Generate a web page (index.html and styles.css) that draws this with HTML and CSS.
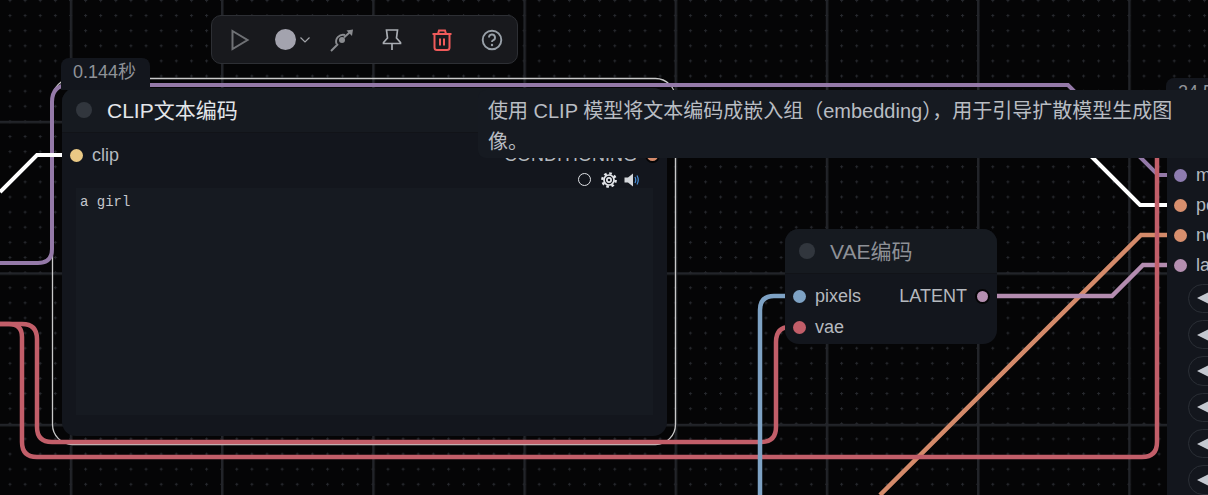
FILE: index.html
```html
<!DOCTYPE html>
<html lang="zh-CN">
<head>
  <meta charset="UTF-8" />
  <title>ComfyUI</title>
  <link rel="stylesheet" href="styles.css">
</head>
<body>

<main class="canvas">

  <!-- grid + links -->
  <svg class="wires" width="1208" height="495" viewBox="0 0 1208 495" fill="none">
    <defs>
      <pattern id="dots" width="15.12" height="15.12" patternUnits="userSpaceOnUse" patternTransform="translate(8.5 -1)">
        <path d="M0 1.5h3M1.5 0v3" stroke="#27292e" stroke-width="1"/>
      </pattern>
      <pattern id="major" width="151.2" height="151.5" patternUnits="userSpaceOnUse" patternTransform="translate(69.8 120.8)">
        <rect width="2.5" height="151.5" fill="#222429"/>
        <rect width="151.2" height="2.5" fill="#222429"/>
      </pattern>
    </defs>
    <rect width="1208" height="495" fill="url(#dots)"/>
    <rect width="1208" height="495" fill="url(#major)"/>

    <rect x="52.5" y="78.5" width="623" height="366" rx="20" stroke="#c9c9c9" stroke-width="1.3"/>

    <path d="M0 263H38Q52 263 52 249V102Q52 85 69 85H1068L1158 175H1170" stroke="#9479a8" stroke-width="4"/>
    <path d="M0 192L37 155H64" stroke="#fff" stroke-width="4"/>
    <path d="M1090 155L1140 205H1170" stroke="#fff" stroke-width="4"/>
    <path d="M880 495L1141 235H1170" stroke="#d48a6a" stroke-width="4.500"/>
    <path d="M990 296H1112L1143 265H1170" stroke="#b48cb0" stroke-width="4.500"/>
    <path d="M0 324H22Q37 324 37 339V427Q37 442 52 442H761Q776 442 776 427V342Q776 327 790 327" stroke="#c25e69" stroke-width="4.500"/>
    <path d="M0 324H9Q22 324 22 337V442Q22 457 37 457H1142Q1157 457 1157 442V150" stroke="#c25e69" stroke-width="4.500"/>
    <path d="M760 495V310Q760 296 774 296H790" stroke="#7ea2c4" stroke-width="4.500"/>
  </svg>

  <!-- toolbar -->
  <div class="toolbar">
    <button class="tool">
      <svg width="24" height="24" viewBox="0 0 24 24" fill="none" stroke="#6f7175" stroke-width="2"><path d="M5.500 3L20.500 12L5.500 21Z"/></svg>
    </button>
    <button class="tool tool-color">
      <span class="swatch"></span>
      <svg width="10" height="6" viewBox="0 0 10 6" fill="none" stroke="#a2a4a9" stroke-width="1.200"><path d="M0.500 0.500L5 5L9.500 0.500"/></svg>
    </button>
    <button class="tool">
      <svg width="26" height="26" viewBox="0 0 26 26" fill="none" stroke="#8a8c90" stroke-width="1.900"><path d="M2 24L9 17"/><path d="M7.500 17A7 7 0 0 1 16 8"/><path d="M15 10.500L21 5"/><circle cx="13" cy="13" r="3" fill="#8a8c90" stroke="none"/><path d="M17.500 3.500L24 2.500L23 9Z" fill="#8a8c90" stroke="none"/></svg>
    </button>
    <button class="tool">
      <svg width="22" height="24" viewBox="0 0 22 24" fill="none" stroke="#a9adb3" stroke-width="1.700"><path d="M5.500 2H16.500L15.500 10L19.500 14.500V15.500H2.500V14.500L6.500 10Z"/><path d="M11 15.500V22"/></svg>
    </button>
    <button class="tool">
      <svg width="22" height="24" viewBox="0 0 22 24" fill="none" stroke="#f05a5a" stroke-width="2"><path d="M1.500 6H20.500"/><path d="M7 6L8 2.500H14L15 6"/><path d="M3.500 6V19.500Q3.500 22 6 22H16Q18.500 22 18.500 19.500V6"/><path d="M9 10.500V17.500M13 10.500V17.500"/></svg>
    </button>
    <button class="tool">
      <svg width="22" height="22" viewBox="0 0 22 22" fill="none" stroke="#98a0a8" stroke-width="1.900"><circle cx="11" cy="11" r="9.300"/><path d="M8 8.500A3 3 0 1 1 12 11.300Q11 11.800 11 13"/><circle cx="11" cy="16" r="1.200" fill="#98a0a8" stroke="none"/></svg>
    </button>
  </div>

  <!-- CLIP node -->
  <section class="node node-clip">
    <div class="badge">0.144秒</div>
    <header class="node-head">
      <span class="state"></span>
      <h2 class="title">CLIP文本编码</h2>
    </header>
    <div class="node-body">
      <div class="slots">
        <div class="slot"><i class="pin pin-clip"></i>clip</div>
        <div class="slot slot-out">CONDITIONING<i class="pin pin-out pin-cond"></i></div>
      </div>
      <div class="prompt-tools">
        <span class="ring"></span>
        <svg width="16" height="16" viewBox="0 0 24 24" fill="none" stroke="#e4e6ea"><circle cx="12" cy="12" r="3.200" stroke-width="2.500"/><circle cx="12" cy="12" r="7.500" stroke-width="2.600"/><circle cx="12" cy="12" r="10" stroke-width="3.600" stroke-dasharray="3.930 3.930"/></svg>
        <svg width="16" height="14" viewBox="0 0 16 14" fill="none"><path d="M0.500 4.500H4L9 0.500V13.500L4 9.500H0.500Z" fill="#d5d8dc"/><path d="M11 4Q12.500 7 11 10M13 2.500Q15.500 7 13 11.500" stroke="#4a90d9" stroke-width="1.200"/></svg>
      </div>
      <div class="prompt">a girl</div>
    </div>
  </section>

  <!-- VAE node -->
  <section class="node node-vae">
    <header class="node-head">
      <span class="state"></span>
      <h2 class="title title-dim">VAE编码</h2>
    </header>
    <div class="node-body">
      <div class="slots">
        <div class="slot"><i class="pin pin-pixels"></i>pixels</div>
        <div class="slot slot-out">LATENT<i class="pin pin-out pin-latent"></i></div>
      </div>
      <div class="slots">
        <div class="slot"><i class="pin pin-vae"></i>vae</div>
      </div>
    </div>
  </section>

  <!-- KSampler, cut by the window edge -->
  <section class="node node-sampler">
    <div class="badge">24.5秒</div>
    <div class="sampler-inputs">
      <div class="slot"><i class="pin pin-model"></i>model</div>
      <div class="slot"><i class="pin pin-pos"></i>positive</div>
      <div class="slot"><i class="pin pin-pos"></i>negative</div>
      <div class="slot"><i class="pin pin-latent-in"></i>latent_image</div>
    </div>
    <div class="widgets">
      <div class="widget"><i class="arrow"></i></div>
      <div class="widget"><i class="arrow"></i></div>
      <div class="widget"><i class="arrow"></i></div>
      <div class="widget"><i class="arrow"></i></div>
      <div class="widget"><i class="arrow"></i></div>
      <div class="widget"><i class="arrow"></i></div>
    </div>
  </section>

  <!-- tooltip -->
  <div class="tooltip">使用 CLIP 模型将文本编码成嵌入组（embedding），用于引导扩散模型生成图像。</div>

</main>

</body>
</html>
```

FILE: styles.css
```css
* {
  box-sizing: border-box;
}

body {
  margin: 0;
  background: #050506;
  font-family: "Liberation Sans", "Noto Sans CJK SC", sans-serif;
  overflow: hidden;
}

.canvas {
  position: relative;
  width: 1208px;
  height: 495px;
  overflow: hidden;
}

.wires {
  position: absolute;
  left: 0;
  top: 0;
}

/* toolbar */
.toolbar {
  position: absolute;
  left: 211px;
  top: 15px;
  width: 307px;
  height: 49px;
  padding-left: 2px;
  display: flex;
  align-items: center;
  background: #18191d;
  border: 1px solid #2d2f34;
  border-radius: 10px;
}

.tool {
  flex: none;
  width: 50px;
  height: 100%;
  padding: 0;
  display: flex;
  align-items: center;
  justify-content: center;
  gap: 4px;
  background: none;
  border: none;
}

.tool-color {
  width: 53px;
  padding-left: 3px;
}

.swatch {
  width: 21px;
  height: 21px;
  border-radius: 50%;
  background: #a3a3ae;
}

/* nodes */
.node {
  position: absolute;
  background: #13161d;
  border-radius: 14px;
  color: #b5b9bf;
  font-size: 18px;
}

.node-clip {
  left: 62px;
  top: 88px;
  width: 605px;
  height: 348px;
  display: flex;
  flex-direction: column;
}

.node-vae {
  left: 785px;
  top: 229px;
  width: 212px;
  height: 115px;
}

.node-sampler {
  left: 1167px;
  top: 108px;
  width: 300px;
  height: 500px;
  border-radius: 14px 0 0 0;
}

.badge {
  position: absolute;
  left: -1px;
  top: -30px;
  padding: 0 14px 0 12px;
  height: 32px;
  line-height: 29px;
  font-size: 18px;
  color: #8f9298;
  background: #13161d;
  border-radius: 8px 8px 0 0;
}

.node-head {
  height: 45px;
  flex: none;
  padding-left: 14px;
  display: flex;
  align-items: center;
  gap: 15px;
  background: #161a20;
  border-bottom: 1px solid #111318;
  border-radius: 14px 14px 0 0;
}

.state {
  width: 16px;
  height: 16px;
  border-radius: 50%;
  background: #31363d;
}

.title {
  margin: 0 0 2px;
  font-size: 21px;
  font-weight: normal;
  color: #e3e6ea;
}

.title-dim {
  color: #8e9197;
}

.node-body {
  flex: 1;
  display: flex;
  flex-direction: column;
  padding-top: 7px;
}

.slots {
  height: 31px;
  padding: 0 8px;
  display: flex;
  justify-content: space-between;
  align-items: center;
}

.slot {
  display: flex;
  align-items: center;
  gap: 9px;
  white-space: nowrap;
}

.pin {
  width: 13px;
  height: 13px;
  border-radius: 50%;
}

.pin-clip { background: #eac985; }
.pin-pixels { background: #7ea2c4; }
.pin-vae { background: #c25e69; }
.pin-model { background: #8e7cb0; }
.pin-pos { background: #d88f6e; }
.pin-latent-in { background: #b58fb0; }

/* outputs have a dark ring round them */
.pin-out {
  width: 15px;
  height: 15px;
  margin: 0 -1px;
  border: 2px solid #050506;
}

.pin-cond { background: #d48a6a; }
.pin-latent { background: #b58fb0; }

.prompt-tools {
  height: 17px;
  padding-right: 27px;
  display: flex;
  justify-content: flex-end;
  align-items: center;
  gap: 7px;
}

.ring {
  width: 13px;
  height: 13px;
  margin-right: 3px;
  border: 1.5px solid #dfe1e5;
  border-radius: 50%;
}

.prompt {
  flex: none;
  height: 227px;
  margin: 0 14px;
  padding: 6px 4px;
  background: #161a21;
  color: #c4c7cc;
  font-family: "Liberation Mono", monospace;
  font-size: 14px;
}

.sampler-inputs {
  padding: 52px 0 0 7px;
  display: flex;
  flex-direction: column;
}

.sampler-inputs .slot {
  height: 30.2px;
}

.widgets {
  margin-top: 3px;
  padding-left: 21px;
  display: flex;
  flex-direction: column;
  gap: 7px;
}

.widget {
  width: 200px;
  height: 29.300px;
  padding-left: 8px;
  display: flex;
  align-items: center;
  border: 1.500px solid #2a2e35;
  border-radius: 15px;
}

.arrow {
  width: 0;
  height: 0;
  border-top: 6px solid transparent;
  border-bottom: 6px solid transparent;
  border-right: 12px solid #c4c8d0;
}

/* tooltip */
.tooltip {
  position: absolute;
  left: 478px;
  top: 90px;
  width: 740px;
  height: 68px;
  padding: 6px 30px 0 10px;
  background: #161a21;
  border-radius: 8px 0 0 8px;
  color: #b9bdc3;
  font-size: 20px;
  line-height: 31px;
}
```
